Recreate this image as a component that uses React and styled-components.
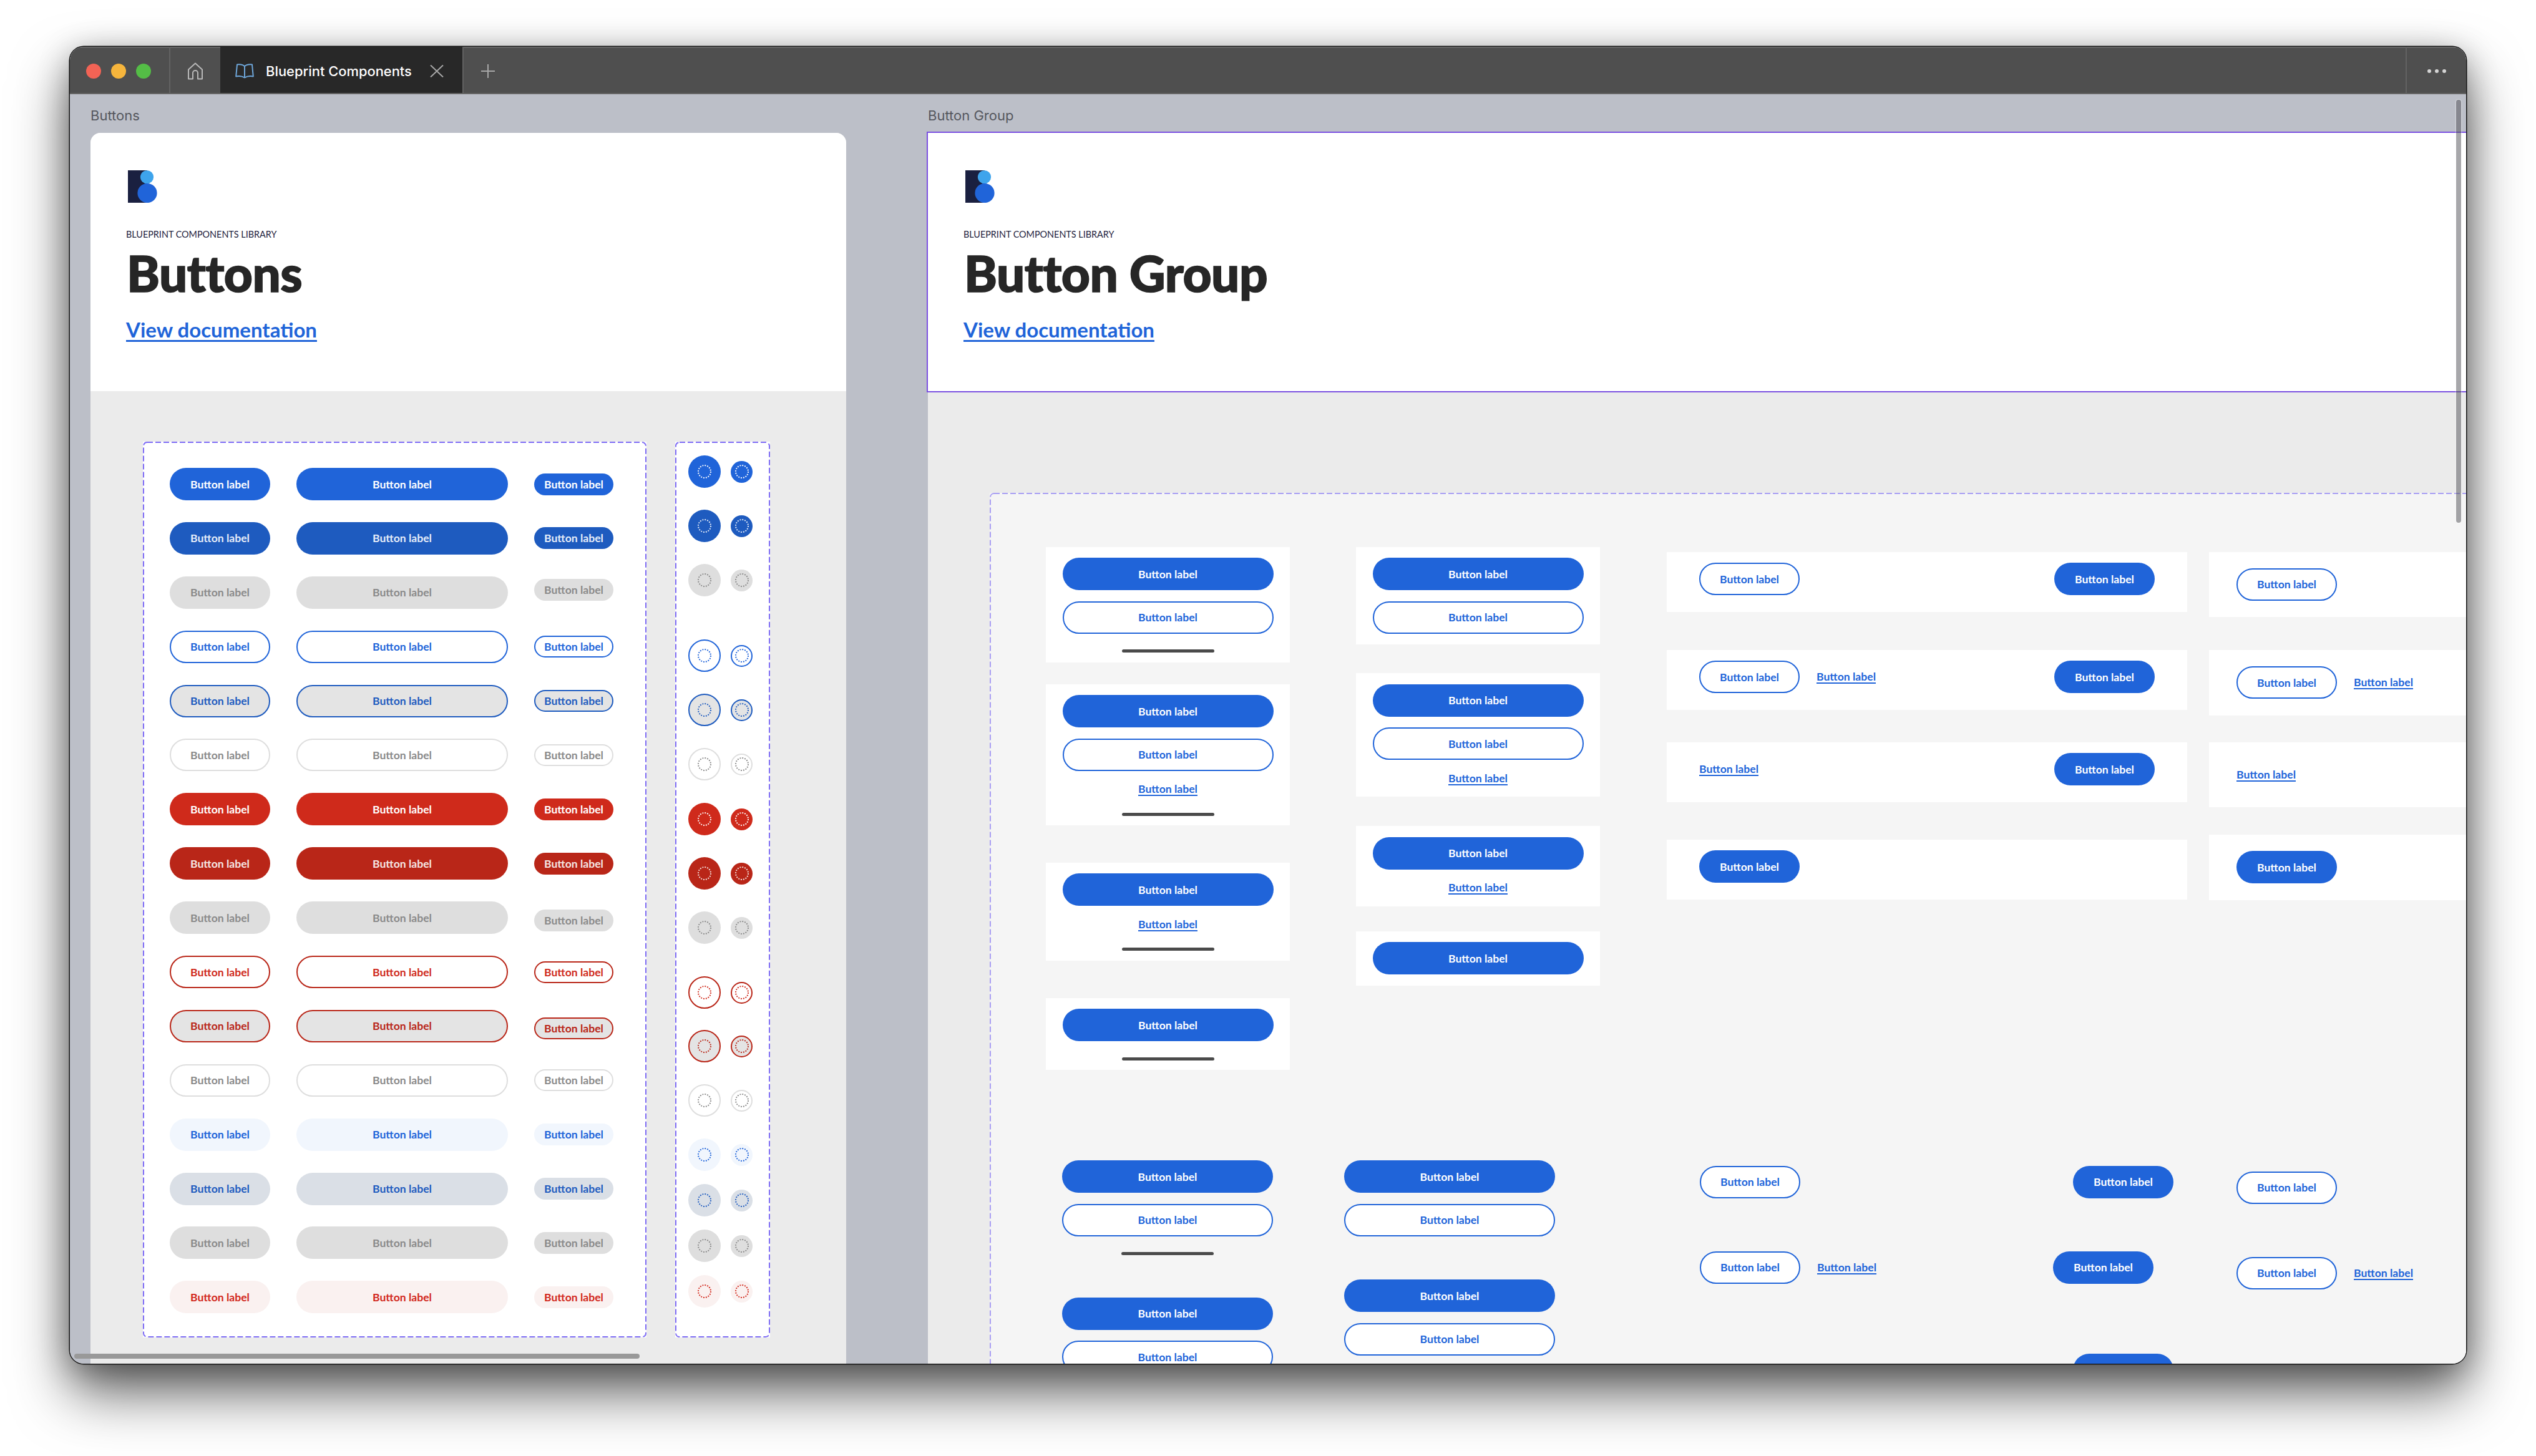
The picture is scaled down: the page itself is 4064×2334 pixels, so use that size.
import React from 'react';
import styled, { createGlobalStyle, css } from 'styled-components';

const BLUE = '#2064d9';
const BLUE_DARK = '#1e5bbf';
const RED = '#cf2a1b';
const RED_DARK = '#b92618';
const GREY_TEXT = '#8a8a8a';
const GREY_FILL = '#dedede';
const PRESSED_FILL = '#e4e4e4';

const variants = {
  primary: { bg: BLUE, fg: '#fff' },
  primaryPressed: { bg: BLUE_DARK, fg: '#e6edf9' },
  disabled: { bg: GREY_FILL, fg: GREY_TEXT },
  outline: { bg: '#fff', fg: BLUE, line: BLUE },
  outlinePressed: { bg: PRESSED_FILL, fg: BLUE_DARK, line: BLUE_DARK },
  outlineDisabled: { bg: '#fff', fg: GREY_TEXT, line: GREY_FILL },
  danger: { bg: RED, fg: '#fff' },
  dangerPressed: { bg: RED_DARK, fg: '#f5e6e4' },
  dangerOutline: { bg: '#fff', fg: RED, line: RED_DARK },
  dangerOutlinePressed: { bg: PRESSED_FILL, fg: RED_DARK, line: RED_DARK },
  ghost: { bg: '#f1f6fd', fg: BLUE },
  ghostPressed: { bg: '#dadfe6', fg: BLUE_DARK },
  ghostDisabled: { bg: GREY_FILL, fg: GREY_TEXT },
  ghostDanger: { bg: '#faf1f0', fg: '#d2281c' },
};

// rows of the buttons sheet, smallShift is the nudge the small button has in the file
const rows = [
  { variant: 'primary', center: 756 },
  { variant: 'primaryPressed', center: 843 },
  { variant: 'disabled', center: 930, smallShift: -4 },
  { variant: 'outline', center: 1051 },
  { variant: 'outlinePressed', center: 1138 },
  { variant: 'outlineDisabled', center: 1225 },
  { variant: 'danger', center: 1313 },
  { variant: 'dangerPressed', center: 1400 },
  { variant: 'disabled', center: 1487, smallShift: 4 },
  { variant: 'dangerOutline', center: 1591 },
  { variant: 'dangerOutlinePressed', center: 1677, smallShift: 4 },
  { variant: 'outlineDisabled', center: 1764 },
  { variant: 'ghost', center: 1851 },
  { variant: 'ghostPressed', center: 1924 },
  { variant: 'ghostDisabled', center: 1997 },
  { variant: 'ghostDanger', center: 2070 },
];

const GlobalStyle = createGlobalStyle`
  html, body {
    margin: 0;
    background: #fff;
    overflow: hidden;
  }
  * {
    box-sizing: border-box;
  }
`;

const Page = styled.div`
  width: 4064px;
  height: 2334px;
  padding: 75px 0 0 112px;
  background: #fff;
`;

const Window = styled.div`
  position: relative;
  width: 3840px;
  height: 2111px;
  display: flex;
  flex-direction: column;
  border-radius: 22px;
  overflow: hidden;
  background: #bcbfc8;
`;

const WindowShadow = styled.div`
  width: 3840px;
  height: 2111px;
  border-radius: 22px;
  box-shadow: 0 0 0 1.5px #151515, 0 46px 90px rgba(0, 0, 0, 0.62), 0 10px 50px rgba(0, 0, 0, 0.3);
`;

const TabBar = styled.div`
  flex: none;
  height: 76px;
  display: flex;
  align-items: stretch;
  background: #4f4f4f;
  border-bottom: 2px solid #666;
  box-shadow: inset 0 1.5px 0 #6d6d6d;
`;

const Lights = styled.div`
  width: 161px;
  display: flex;
  align-items: center;
  gap: 16px;
  padding: 3px 0 0 26px;
  border-right: 2px solid #626262;
`;

const Light = styled.span`
  width: 24px;
  height: 24px;
  border-radius: 50%;
  background: ${(p) => p.$color};
`;

const HomeTab = styled.div`
  width: 80px;
  display: flex;
  align-items: center;
  justify-content: center;
  padding-top: 3px;
`;

const ActiveTab = styled.div`
  width: 388px;
  display: flex;
  align-items: center;
  padding: 3px 0 0 24px;
  background: #282828;
  color: #fff;
  font-family: Inter, sans-serif;
  font-size: 21.9px;
  font-weight: 500;
`;

const TabTitle = styled.span`
  margin-left: 19px;
  width: 263px;
  white-space: nowrap;
`;

const NewTab = styled.div`
  width: 80px;
  display: flex;
  align-items: center;
  justify-content: center;
  padding-top: 3px;
  border-left: 2px solid #626262;
`;

const TabSpacer = styled.div`
  flex: 1;
`;

const MoreTab = styled.div`
  width: 97px;
  display: flex;
  align-items: center;
  justify-content: center;
  gap: 6px;
  padding-top: 3px;
  border-left: 2px solid #626262;
`;

const MoreDot = styled.span`
  width: 6px;
  height: 6px;
  border-radius: 50%;
  background: #d4d4d4;
`;

const Canvas = styled.div`
  flex: 1;
  min-height: 0;
  display: flex;
  gap: 131px;
  padding-left: 33px;
`;

const Panel = styled.section`
  display: flex;
  flex-direction: column;
  min-height: 0;
  min-width: 0;
  ${(p) => (p.$wide ? 'flex: 1;' : 'width: 1211px; flex: none;')}
`;

const PanelLabel = styled.div`
  flex: none;
  height: 62px;
  padding-top: 20px;
  line-height: 28px;
  font-family: Inter, sans-serif;
  font-size: 22px;
  color: #56585f;
`;

const PanelBody = styled.div`
  flex: 1;
  min-height: 0;
  overflow: ${(p) => (p.$wide ? 'visible' : 'hidden')};
  background: #ebebeb;
  ${(p) => !p.$wide && 'border-radius: 16px 16px 0 0;'}
`;

const Header = styled.header`
  height: 414px;
  padding: 60px 0 0 57px;
  background: #fff;
  ${(p) =>
    p.$selected &&
    css`
      position: relative;
      box-shadow: 0 0 0 2px #7a4fe0;
    `}
`;

const Logo = styled.svg`
  display: block;
  margin-left: 3px;
`;

const Eyebrow = styled.div`
  margin-top: 41px;
  line-height: 20px;
  font-family: Lato, sans-serif;
  font-size: 14.4px;
  color: #1f2440;
  white-space: nowrap;
`;

const Title = styled.h1`
  margin: 11px 0 0 1px;
  line-height: 80px;
  font-family: Lato, sans-serif;
  font-size: 80px;
  font-weight: 900;
  letter-spacing: -0.5px;
  -webkit-text-stroke: 1.6px #262626;
  color: #262626;
  white-space: nowrap;
`;

const DocLink = styled.a`
  display: inline-block;
  margin-top: 31px;
  line-height: 40px;
  font-family: Lato, sans-serif;
  font-size: 33px;
  font-weight: 700;
  color: ${BLUE};
  text-decoration: underline;
  text-decoration-thickness: 3px;
  text-underline-offset: 4px;
`;

const Sheet = styled.div`
  display: flex;
  gap: 46px;
  padding: 81px 0 0 84px;
`;

const Dashed = styled.div`
  position: relative;
  background: #fff;
`;

const DashFrame = styled.svg`
  position: absolute;
  inset: 0;
  width: 100%;
  height: 100%;
  pointer-events: none;
`;

const DashRect = styled.rect`
  x: 1px;
  y: 1px;
  width: calc(100% - 2px);
  height: calc(100% - 2px);
  rx: 6px;
  fill: none;
  stroke: ${(p) => p.$color};
  stroke-width: 2px;
  stroke-dasharray: 9 4;
`;

const ButtonSheet = styled(Dashed)`
  width: 807px;
  height: 1436px;
  padding: 42px 0 0 43px;
  display: flex;
  flex-direction: column;
  gap: 34.9px;
`;

const IconSheet = styled(Dashed)`
  width: 152px;
  height: 1436px;
  padding: 22px 0 0 21px;
  display: flex;
  flex-direction: column;
`;

const ButtonRow = styled.div`
  display: flex;
  align-items: center;
  gap: 42px;
  height: 52px;
`;

const Button = styled.button`
  flex: none;
  display: inline-flex;
  align-items: center;
  justify-content: center;
  width: ${(p) => p.$w}px;
  height: ${(p) => (p.$small ? 35 : 52)}px;
  padding: 0;
  margin-top: ${(p) => (p.$shift ? p.$shift * 2 : p.$top || 0)}px;
  border: ${(p) => (variants[p.$variant].line ? `2.5px solid ${variants[p.$variant].line}` : '0')};
  border-radius: ${(p) => (p.$small ? 17.5 : 26)}px;
  background: ${(p) => variants[p.$variant].bg};
  color: ${(p) => variants[p.$variant].fg};
  font-family: Lato, sans-serif;
  font-size: 17.6px;
  font-weight: 700;
  white-space: nowrap;
`;

const IconRow = styled.div`
  flex: none;
  display: flex;
  align-items: center;
  gap: 16px;
  height: 52px;
  margin-top: ${(p) => p.$top}px;
`;

const IconButton = styled.span`
  flex: none;
  display: flex;
  align-items: center;
  justify-content: center;
  width: ${(p) => p.$size}px;
  height: ${(p) => p.$size}px;
  border: ${(p) => (variants[p.$variant].line ? `2.5px solid ${variants[p.$variant].line}` : '0')};
  border-radius: 50%;
  background: ${(p) => variants[p.$variant].bg};
  color: ${(p) => variants[p.$variant].fg};
`;

const BoardClip = styled.div`
  overflow: hidden;
  height: 1559px;
`;

const Board = styled(Dashed)`
  width: 2500px;
  height: 1700px;
  margin: 163px 0 0 99px;
  padding: 86.6px 0 0 90px;
  background: #f5f5f5;
`;

const BoardRow = styled.div`
  display: flex;
  align-items: flex-start;
`;

const Column = styled.div`
  flex: none;
  display: flex;
  flex-direction: column;
  width: ${(p) => p.$w}px;
  margin-right: ${(p) => p.$after || 0}px;
`;

const PhoneCard = styled.div`
  display: flex;
  flex-direction: column;
  align-items: center;
  gap: 17.5px;
  padding: 17.5px 26px ${(p) => (p.$bar ? 15.5 : 17.5)}px;
  margin-top: ${(p) => p.$top || 0}px;
  background: #fff;
`;

const HomeBar = styled.div`
  flex: none;
  align-self: center;
  width: 148px;
  height: 5px;
  margin-top: 8px;
  border-radius: 3px;
  background: #4a4a4a;
`;

const TextLink = styled.a`
  display: block;
  flex: none;
  line-height: 24px;
  font-family: Lato, sans-serif;
  font-size: 17.6px;
  font-weight: 700;
  color: ${BLUE};
  text-decoration: underline;
  text-decoration-thickness: 1.5px;
  text-underline-offset: 3px;
  white-space: nowrap;
`;

const WideCard = styled.div`
  display: flex;
  align-items: center;
  justify-content: space-between;
  height: 96px;
  padding: 0 52px 8.6px;
  margin-top: ${(p) => p.$top}px;
  background: #fff;
`;

const EdgeCard = styled.div`
  display: flex;
  align-items: center;
  gap: 27px;
  height: 104.5px;
  padding-left: 44px;
  margin-top: ${(p) => p.$top}px;
  background: #fff;
`;

const Cluster = styled.div`
  display: flex;
  align-items: center;
  gap: 27px;
`;

const FreeStack = styled.div`
  flex: none;
  display: flex;
  flex-direction: column;
  gap: 17.5px;
  width: 338px;
  margin-left: ${(p) => p.$left}px;
`;

const FreeRow = styled.div`
  display: flex;
  align-items: center;
  justify-content: ${(p) => (p.$w ? 'space-between' : 'flex-start')};
  gap: 27px;
  width: ${(p) => (p.$w ? `${p.$w}px` : 'auto')};
  margin-top: ${(p) => p.$top}px;
`;

const FreeColumn = styled.div`
  flex: none;
  display: flex;
  flex-direction: column;
  margin-left: ${(p) => p.$left}px;
`;

const HScroll = styled.div`
  position: absolute;
  left: 7px;
  bottom: 8px;
  width: 906px;
  height: 8px;
  border-radius: 4px;
  background: #999;
`;

const VScroll = styled.div`
  position: absolute;
  top: 85px;
  right: 8px;
  width: 8px;
  height: 678px;
  border-radius: 4px;
  background: rgba(80, 80, 85, 0.5);
  box-shadow: 0 0 0 1.5px rgba(255, 255, 255, 0.25);
`;

const HomeIcon = () => (
  <svg width="26" height="28" viewBox="0 0 26 28" fill="none" stroke="#b8b8b8" strokeWidth="2" strokeLinejoin="round">
    <path d="M2 11.5 13 1.5l11 10V26.5h-7V17a4 4 0 0 0-8 0v9.5H2z" />
  </svg>
);

const BookIcon = () => (
  <svg width="30" height="24" viewBox="0 0 30 24" fill="none" stroke="#6fa8dc" strokeWidth="2" strokeLinejoin="round">
    <path d="M15 4.5C13 2 8 1 3 1.5L1.2 20.5C6 19.5 11 20 15 22.5 19 20 24 19.5 28.8 20.5L27 1.5C22 1 17 2 15 4.5zM15 4.5V22.5" />
  </svg>
);

const CloseIcon = () => (
  <svg width="22" height="20" viewBox="0 0 22 20" stroke="#a8a8a8" strokeWidth="2">
    <path d="M1 0.5 21 19.5M21 0.5 1 19.5" />
  </svg>
);

const PlusIcon = () => (
  <svg width="22" height="22" viewBox="0 0 22 22" stroke="#a8a8a8" strokeWidth="2">
    <path d="M11 0V22M0 11H22" />
  </svg>
);

const BlueprintLogo = () => (
  <Logo width="47" height="52" viewBox="0 0 47 52">
    <rect x="0" y="0" width="31" height="52" fill="#1a2040" />
    <circle cx="30.5" cy="10.8" r="10.6" fill="#3ea4ec" />
    <circle cx="31" cy="36.5" r="15.6" fill="#2064d9" />
  </Logo>
);

const DotRing = () => (
  <svg width="24" height="24" viewBox="0 0 24 24" fill="none" stroke="currentColor" strokeWidth="2">
    <circle cx="12" cy="12" r="10" strokeDasharray="1.9 2.03" />
  </svg>
);

const Frame = ({ color }) => (
  <DashFrame>
    <DashRect $color={color} />
  </DashFrame>
);

const Circle = ({ variant, size }) => (
  <IconButton $variant={variant} $size={size}>
    <DotRing />
  </IconButton>
);

const Btn = ({ variant = 'primary', w = 338, ...rest }) => (
  <Button $variant={variant} $w={w} {...rest}>
    Button label
  </Button>
);

const Link = () => <TextLink>Button label</TextLink>;

const ButtonsPanel = () => (
  <Panel>
    <PanelLabel>Buttons</PanelLabel>
    <PanelBody>
      <Header>
        <BlueprintLogo />
        <Eyebrow>BLUEPRINT COMPONENTS LIBRARY</Eyebrow>
        <Title>Buttons</Title>
        <DocLink>View documentation</DocLink>
      </Header>
      <Sheet>
        <ButtonSheet>
          <Frame color="#7e6cf5" />
          {rows.map((row, i) => (
            <ButtonRow key={i}>
              <Btn variant={row.variant} w={161} />
              <Btn variant={row.variant} w={339} />
              <Btn variant={row.variant} w={127} $small $shift={row.smallShift} />
            </ButtonRow>
          ))}
        </ButtonSheet>
        <IconSheet>
          <Frame color="#7e6cf5" />
          {rows.map((row, i) => (
            <IconRow key={i} $top={i === 0 ? 0 : row.center - rows[i - 1].center - 52}>
              <Circle variant={row.variant} size={52} />
              <Circle variant={row.variant} size={35} />
            </IconRow>
          ))}
        </IconSheet>
      </Sheet>
    </PanelBody>
  </Panel>
);

const GroupPanel = () => (
  <Panel $wide>
    <PanelLabel>Button Group</PanelLabel>
    <PanelBody $wide>
      <Header $selected>
        <BlueprintLogo />
        <Eyebrow>BLUEPRINT COMPONENTS LIBRARY</Eyebrow>
        <Title>Button Group</Title>
        <DocLink>View documentation</DocLink>
      </Header>
      <BoardClip>
        <Board>
          <Frame color="#a99ff3" />
          <BoardRow>
            <Column $w={391} $after={106}>
              <PhoneCard $bar>
                <Btn />
                <Btn variant="outline" />
                <HomeBar />
              </PhoneCard>
              <PhoneCard $bar $top={35}>
                <Btn />
                <Btn variant="outline" />
                <Link />
                <HomeBar />
              </PhoneCard>
              <PhoneCard $bar $top={59.5}>
                <Btn />
                <Link />
                <HomeBar />
              </PhoneCard>
              <PhoneCard $bar $top={60}>
                <Btn />
                <HomeBar />
              </PhoneCard>
            </Column>
            <Column $w={391} $after={107}>
              <PhoneCard>
                <Btn />
                <Btn variant="outline" />
              </PhoneCard>
              <PhoneCard $top={46}>
                <Btn />
                <Btn variant="outline" />
                <Link />
              </PhoneCard>
              <PhoneCard $top={47}>
                <Btn />
                <Link />
              </PhoneCard>
              <PhoneCard $top={40}>
                <Btn />
              </PhoneCard>
            </Column>
            <Column $w={834} $after={35}>
              <WideCard $top={8}>
                <Btn variant="outline" w={161} />
                <Btn w={161} />
              </WideCard>
              <WideCard $top={61}>
                <Cluster>
                  <Btn variant="outline" w={161} />
                  <Link />
                </Cluster>
                <Btn w={161} />
              </WideCard>
              <WideCard $top={52}>
                <Link />
                <Btn w={161} />
              </WideCard>
              <WideCard $top={60}>
                <Btn w={161} />
              </WideCard>
            </Column>
            <Column $w={500}>
              <EdgeCard $top={8}>
                <Btn variant="outline" w={161} />
              </EdgeCard>
              <EdgeCard $top={53}>
                <Btn variant="outline" w={161} />
                <Link />
              </EdgeCard>
              <EdgeCard $top={43}>
                <Link />
              </EdgeCard>
              <EdgeCard $top={44}>
                <Btn w={161} />
              </EdgeCard>
            </Column>
          </BoardRow>
          <BoardRow>
            <FreeStack $left={26}>
              <Btn $top={145} />
              <Btn variant="outline" />
              <HomeBar />
              <Btn $top={50} />
              <Btn variant="outline" />
            </FreeStack>
            <FreeStack $left={114}>
              <Btn $top={145} />
              <Btn variant="outline" />
              <Btn $top={52} />
              <Btn variant="outline" />
            </FreeStack>
            <FreeColumn $left={232}>
              <FreeRow $w={759} $top={153.5}>
                <Btn variant="outline" w={161} />
                <Btn w={161} />
              </FreeRow>
              <FreeRow $w={727} $top={85}>
                <Cluster>
                  <Btn variant="outline" w={161} />
                  <Link />
                </Cluster>
                <Btn w={161} />
              </FreeRow>
              <FreeRow $w={759} $top={112}>
                <span />
                <Btn w={161} />
              </FreeRow>
            </FreeColumn>
            <FreeColumn $left={101}>
              <FreeRow $top={162.5}>
                <Btn variant="outline" w={161} />
              </FreeRow>
              <FreeRow $top={85}>
                <Btn variant="outline" w={161} />
                <Link />
              </FreeRow>
            </FreeColumn>
          </BoardRow>
        </Board>
      </BoardClip>
    </PanelBody>
  </Panel>
);

const App = () => (
  <Page>
    <GlobalStyle />
    <WindowShadow>
      <Window>
        <TabBar>
          <Lights>
            <Light $color="#f26355" />
            <Light $color="#f6b53c" />
            <Light $color="#54bd46" />
          </Lights>
          <HomeTab>
            <HomeIcon />
          </HomeTab>
          <ActiveTab>
            <BookIcon />
            <TabTitle>Blueprint Components</TabTitle>
            <CloseIcon />
          </ActiveTab>
          <NewTab>
            <PlusIcon />
          </NewTab>
          <TabSpacer />
          <MoreTab>
            <MoreDot />
            <MoreDot />
            <MoreDot />
          </MoreTab>
        </TabBar>
        <Canvas>
          <ButtonsPanel />
          <GroupPanel />
        </Canvas>
        <HScroll />
        <VScroll />
      </Window>
    </WindowShadow>
  </Page>
);

export default App;
